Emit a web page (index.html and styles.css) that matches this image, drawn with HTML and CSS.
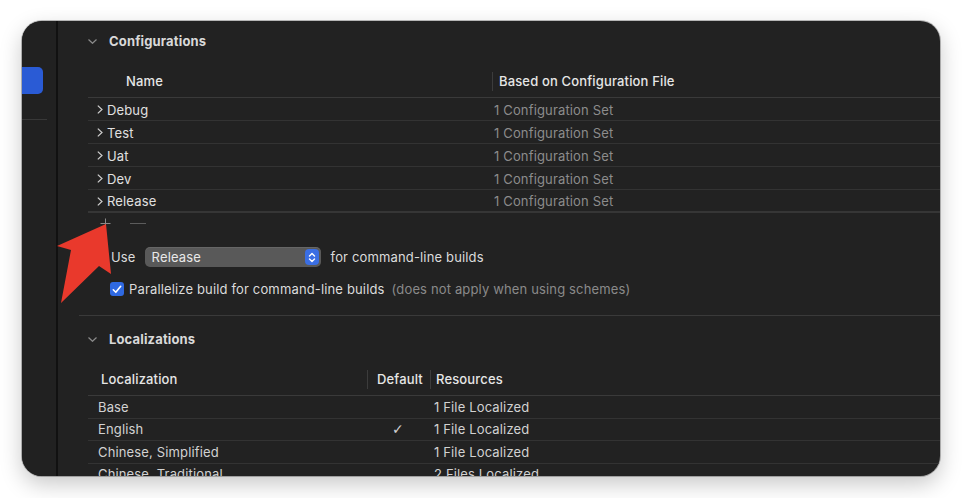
FILE: index.html
```html
<!DOCTYPE html>
<html>
<head>
<meta charset="utf-8">
<link rel="stylesheet" href="styles.css">
</head>
<body>
<div class="window">
  <aside class="sidebar">
    <div class="sel"></div>
    <div class="side-sep"></div>
  </aside>
  <main class="content">
    <section class="section">
      <div class="sec-head">
        <svg class="sec-chev" width="9" height="5" viewBox="0 0 9 5"><path d="M0.5 0.5 L4.5 4.3 L8.5 0.5" fill="none" stroke="#8a8a8a" stroke-width="1.2"/></svg>
        <span>Configurations</span>
      </div>
      <div class="table cfg">
        <div class="thead">
          <div class="th c1">Name</div>
          <div class="th c2">Based on Configuration File</div>
        </div>
        <div class="row"><div class="td c1"><svg class="rchev" width="6" height="9" viewBox="0 0 6 9"><path d="M0.8 0.6 L5 4.5 L0.8 8.4" fill="none" stroke="#cfcfcf" stroke-width="1.2"/></svg>Debug</div><div class="td c2">1 Configuration Set</div></div>
        <div class="row"><div class="td c1"><svg class="rchev" width="6" height="9" viewBox="0 0 6 9"><path d="M0.8 0.6 L5 4.5 L0.8 8.4" fill="none" stroke="#cfcfcf" stroke-width="1.2"/></svg>Test</div><div class="td c2">1 Configuration Set</div></div>
        <div class="row"><div class="td c1"><svg class="rchev" width="6" height="9" viewBox="0 0 6 9"><path d="M0.8 0.6 L5 4.5 L0.8 8.4" fill="none" stroke="#cfcfcf" stroke-width="1.2"/></svg>Uat</div><div class="td c2">1 Configuration Set</div></div>
        <div class="row"><div class="td c1"><svg class="rchev" width="6" height="9" viewBox="0 0 6 9"><path d="M0.8 0.6 L5 4.5 L0.8 8.4" fill="none" stroke="#cfcfcf" stroke-width="1.2"/></svg>Dev</div><div class="td c2">1 Configuration Set</div></div>
        <div class="row last"><div class="td c1"><svg class="rchev" width="6" height="9" viewBox="0 0 6 9"><path d="M0.8 0.6 L5 4.5 L0.8 8.4" fill="none" stroke="#cfcfcf" stroke-width="1.2"/></svg>Release</div><div class="td c2">1 Configuration Set</div></div>
      </div>
      <div class="addrm">
        <svg class="plus" width="11" height="11" viewBox="0 0 11 11"><path d="M5.5 0.5 V10.5 M0.5 5.5 H10.5" stroke="#8a8a8a" stroke-width="1"/></svg>
        <span class="minus"></span>
      </div>
      <div class="userow">
        <span>Use</span>
        <div class="popup">
          <span>Release</span>
          <span class="stepper"><svg width="8" height="11" viewBox="0 0 8 11"><path d="M1.5 4 L4 1.5 L6.5 4 M1.5 7 L4 9.5 L6.5 7" fill="none" stroke="#fff" stroke-width="1.4" stroke-linecap="round" stroke-linejoin="round"/></svg></span>
        </div>
        <span>for command-line builds</span>
      </div>
      <div class="checkrow">
        <span class="checkbox"><svg width="10" height="9" viewBox="0 0 10 9"><path d="M1.3 4.8 L3.8 7.3 L8.7 1.3" fill="none" stroke="#fff" stroke-width="1.6" stroke-linecap="round" stroke-linejoin="round"/></svg></span>
        <span>Parallelize build for command-line builds</span>
        <span class="note">(does not apply when using schemes)</span>
      </div>
    </section>
    <div class="sec-sep"></div>
    <section class="section">
      <div class="sec-head">
        <svg class="sec-chev" width="9" height="5" viewBox="0 0 9 5"><path d="M0.5 0.5 L4.5 4.3 L8.5 0.5" fill="none" stroke="#8a8a8a" stroke-width="1.2"/></svg>
        <span>Localizations</span>
      </div>
      <div class="table loc">
        <div class="thead">
          <div class="th l1">Localization</div>
          <div class="th l2">Default</div>
          <div class="th l3">Resources</div>
        </div>
        <div class="row"><div class="td l1">Base</div><div class="td l2"></div><div class="td l3">1 File Localized</div></div>
        <div class="row"><div class="td l1">English</div><div class="td l2"><span class="tick">✓</span></div><div class="td l3">1 File Localized</div></div>
        <div class="row"><div class="td l1">Chinese, Simplified</div><div class="td l2"></div><div class="td l3">1 File Localized</div></div>
        <div class="row"><div class="td l1">Chinese, Traditional</div><div class="td l2"></div><div class="td l3">2 Files Localized</div></div>
      </div>
    </section>
  </main>
</div>
<svg class="arrow" width="962" height="498" viewBox="0 0 962 498"><polygon points="106,224 111,274 99,266 61,303 71,250 57,246" fill="#e9392c"/></svg>
</body>
</html>
```
FILE: styles.css
```css
* { box-sizing: border-box; }
html, body { margin: 0; }
body {
  position: relative;
  width: 962px;
  height: 498px;
  overflow: hidden;
  background: #fff;
  padding: 21px 22px;
  font-family: Inter, "Noto Sans", sans-serif;
  font-size: 13px;
  letter-spacing: 0.15px;
  color: #dcdcdc;
}
.window {
  width: 918px;
  height: 455px;
  border-radius: 20px;
  background: #222222;
  display: flex;
  overflow: hidden;
  box-shadow: 0 0 0 1px rgba(0,0,0,0.25), 0 8px 22px rgba(0,0,0,0.22);
}
.sidebar {
  width: 36px;
  flex: none;
  background: #212121;
  border-right: 2px solid #111;
  padding-top: 46px;
}
.sel {
  width: 21px;
  height: 27px;
  background: #2a5bd5;
  border-radius: 0 5px 5px 0;
}
.side-sep {
  margin-top: 25px;
  width: 25px;
  height: 1px;
  background: #383838;
}
.content {
  flex: 1;
  min-width: 0;
  padding-top: 10px;
}
.sec-head {
  display: flex;
  align-items: center;
  height: 20px;
  padding-left: 30px;
  gap: 12px;
  font-weight: 700;
  color: #d9d9d9;
}
.sec-chev { flex: none; }
.table { margin-left: 30px; margin-top: 21px; }
.thead {
  display: flex;
  height: 26px;
  border-bottom: 1px solid #3a3a3a;
  color: #e6e6e6;
  font-weight: 500;
}
.th { height: 19px; line-height: 18px; }
.row {
  display: flex;
  height: 23px;
  padding-top: 1px;
  border-bottom: 1px solid #333;
  align-items: center;
}
.td { white-space: nowrap; }
.cfg .c1 { width: 404px; flex: none; }
.cfg .th.c1 { padding-left: 38px; }
.cfg .th.c2 { border-left: 1px solid #3c3c3c; padding-left: 6px; }
.cfg .td.c1 { display: flex; align-items: center; padding-left: 9px; gap: 4px; color: #e0e0e0; }
.cfg .td.c2 { padding-left: 2px; color: #8c8c8c; }
.cfg .row.last { border-bottom: 2px solid #363636; }
.addrm {
  display: flex;
  align-items: center;
  height: 21px;
  padding-left: 42px;
}
.minus {
  width: 16px;
  height: 1px;
  background: #5c5c5c;
  margin-left: 19px;
}
.userow {
  display: flex;
  align-items: center;
  height: 20px;
  margin-top: 13px;
  padding-left: 53px;
  gap: 10px;
}
.popup {
  width: 176px;
  height: 20px;
  margin-left: -1px;
  background: #595959;
  border-radius: 5px;
  display: flex;
  align-items: center;
  justify-content: space-between;
  padding: 0 2px 0 7px;
  color: #e8e8e8;
  box-shadow: inset 0 1px 0 rgba(255,255,255,0.08);
}
.stepper {
  width: 14px;
  height: 16px;
  border-radius: 4px;
  background: #3a6ee3;
  display: flex;
  align-items: center;
  justify-content: center;
}
.checkrow {
  display: flex;
  align-items: center;
  height: 20px;
  margin-top: 12px;
  padding-left: 52px;
}
.checkbox {
  width: 14px;
  height: 14px;
  border-radius: 3px;
  background: #2f69e2;
  display: flex;
  align-items: center;
  justify-content: center;
  margin-right: 5px;
}
.note { color: #8a8a8a; margin-left: 7px; }
.sec-sep {
  margin-top: 16px;
  margin-left: 21px;
  height: 1px;
  background: #3a3a3a;
}
.section + .sec-sep + .section .sec-head { margin-top: 13px; }
.loc { margin-top: 21px; }
.loc .thead { height: 26px; }
.loc .l1 { width: 279px; flex: none; }
.loc .l2 { width: 63px; flex: none; }
.loc .th.l1 { padding-left: 13px; }
.loc .th.l2 { border-left: 1px solid #3c3c3c; padding-left: 9px; }
.loc .th.l3 { border-left: 1px solid #3c3c3c; padding-left: 5px; }
.loc .row { height: 22.5px; padding-top: 0; }
.loc .td { color: #d2d2d2; }
.loc .td.l1 { padding-left: 10px; }
.loc .td.l2 { padding-left: 25px; }
.loc .td.l3 { padding-left: 4px; }
.tick { color: #d0d0d0; font-size: 14px; font-family: "DejaVu Sans", sans-serif; }
.arrow { position: absolute; left: 0; top: 0; pointer-events: none; }
```
